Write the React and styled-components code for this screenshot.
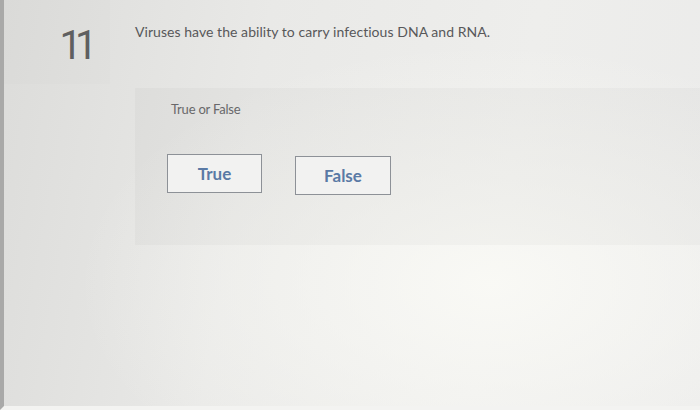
import styled, { createGlobalStyle } from 'styled-components';

const GlobalStyle = createGlobalStyle`
  html, body {
    margin: 0;
    padding: 0;
    width: 700px;
    height: 410px;
    overflow: hidden;
  }
  body {
    font-family: Lato, "Open Sans", "Liberation Sans", sans-serif;
  }
`;

const Screen = styled.main`
  display: flex;
  width: 700px;
  height: 410px;
  box-sizing: border-box;
  border-left: 4px solid #a9a9a8;
  border-bottom: 4px solid #f3f3f1;
  background:
    radial-gradient(ellipse at 70% 70%, rgba(250, 250, 246, 0.9) 0%, rgba(250, 250, 246, 0) 60%),
    linear-gradient(100deg, #dcdcda 0%, #e9e9e7 35%, #eeeeec 70%, #ebebea 100%);
`;

const NumberColumn = styled.div`
  width: 106px;
  height: 84px;
  display: flex;
  justify-content: center;
  padding-top: 24px;
  box-sizing: border-box;
  background-color: rgba(0, 0, 0, 0.008);
`;

const QuestionNumber = styled.span`
  font-family: Roboto, "Open Sans", sans-serif;
  font-size: 40px;
  font-weight: 400;
  line-height: 44px;
  letter-spacing: -7px;
  color: #5f5f60;
  margin-left: 36px;
`;

const Body = styled.section`
  flex: 1;
  display: flex;
  flex-direction: column;
  padding-top: 22px;
  padding-left: 25px;
`;

const Prompt = styled.p`
  margin: 0 0 46px;
  font-size: 14px;
  line-height: 20px;
  color: #58585a;
  letter-spacing: 0.05px;
`;

const AnswerPanel = styled.div`
  height: 157px;
  padding: 13px 0 0 36px;
  box-sizing: border-box;
  background-color: rgba(0, 0, 0, 0.025);
`;

const PanelLabel = styled.div`
  font-size: 13px;
  line-height: 17px;
  color: #68686a;
  letter-spacing: -0.2px;
  margin-bottom: 36px;
`;

const Choices = styled.div`
  display: flex;
  gap: 33px;
  margin-left: -4px;
`;

const ChoiceButton = styled.button`
  width: ${p => p.$w}px;
  height: 39px;
  margin-top: ${p => p.$drop}px;
  border: 1px solid #8d9197;
  background-color: #f2f2f1;
  font-family: Lato, "Open Sans", "Liberation Sans", sans-serif;
  font-size: 17px;
  font-weight: 700;
  color: #5a7aa5;
  cursor: pointer;
  padding: 0;
`;

export default function App() {
  return (
    <>
      <GlobalStyle />
      <Screen>
        <NumberColumn>
          <QuestionNumber>11</QuestionNumber>
        </NumberColumn>
        <Body>
          <Prompt>Viruses have the ability to carry infectious DNA and RNA.</Prompt>
          <AnswerPanel>
            <PanelLabel>True or False</PanelLabel>
            <Choices>
              <ChoiceButton $w={95} $drop={0}>True</ChoiceButton>
              <ChoiceButton $w={96} $drop={2}>False</ChoiceButton>
            </Choices>
          </AnswerPanel>
        </Body>
      </Screen>
    </>
  );
}
